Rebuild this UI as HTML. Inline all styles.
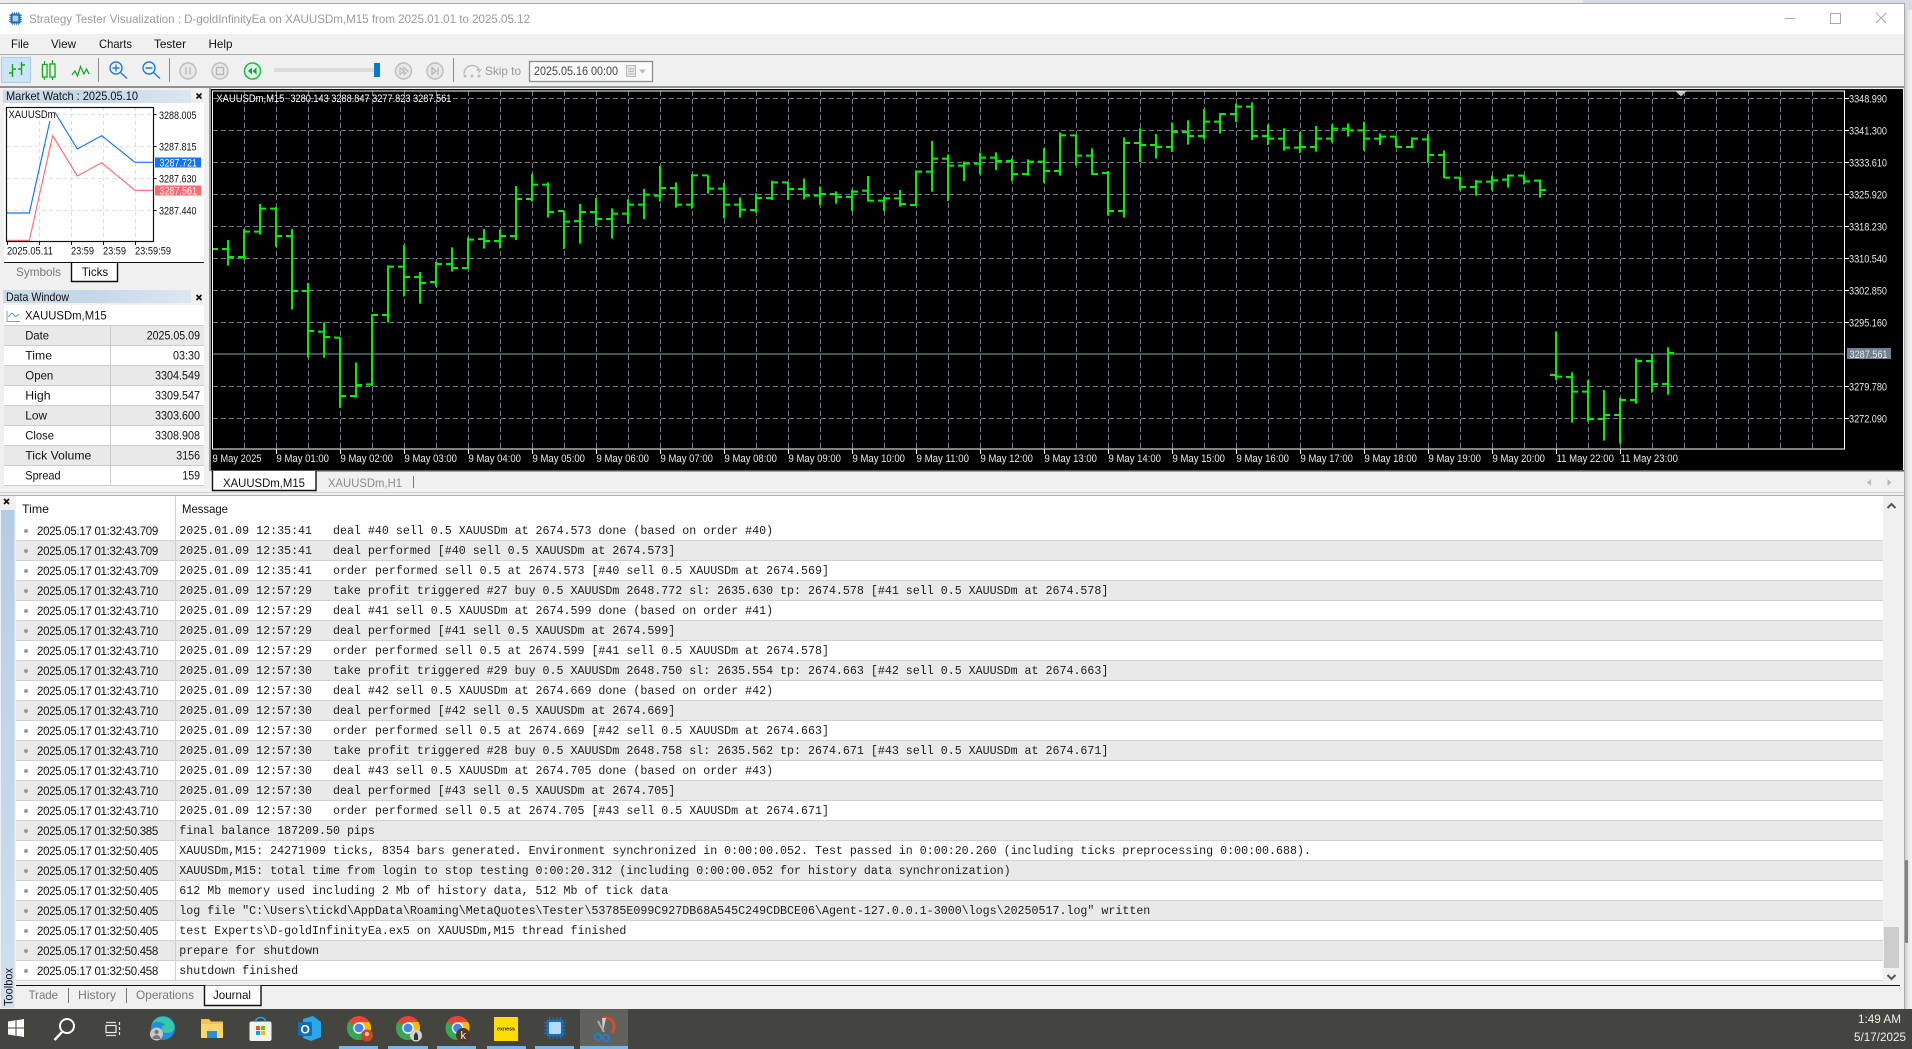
<!DOCTYPE html>
<html>
<head>
<meta charset="utf-8">
<title>Strategy Tester Visualization</title>
<style>
html,body{margin:0;padding:0;background:#f0f0f0}
#w{position:relative;width:1912px;height:1049px;overflow:hidden;background:#f0f0f0;filter:blur(.3px)}
svg#s{position:absolute;left:0;top:0}
svg text{font-family:"Liberation Sans",sans-serif;font-size:12px;fill:#111}
svg text.t{font-size:11px;fill:#e8e8e8}
#rows{position:absolute;left:16px;top:521px;width:1867px}
.r{height:19px;border-bottom:1px solid #d2d2d2;background:#fff;position:relative;line-height:19px;white-space:pre}
.r:nth-child(even){background:#e9e9e9}
.r i{position:absolute;left:8px;top:8px;width:4px;height:4px;border-radius:50%;background:#999}
.r b{position:absolute;left:21px;top:1px;font:11.5px/20px "Liberation Sans",sans-serif;letter-spacing:-.3px;color:#111}
.r u{position:absolute;left:163.3px;top:1px;text-decoration:none;font:11.65px/20px "Liberation Mono",monospace;color:#1c1c1c}
#cd{position:absolute;left:175px;top:496px;width:1px;height:485px;background:#d0d0d0}
</style>
</head>
<body>
<div id="w">
<svg id="s" width="1912" height="1049" viewBox="0 0 1912 1049" xmlns="http://www.w3.org/2000/svg">
<defs>
<linearGradient id="hd" x1="0" x2="1" y1="0" y2="0"><stop offset="0" stop-color="#cddcea"/><stop offset=".45" stop-color="#c4d7e8"/><stop offset="1" stop-color="#dce7f1"/></linearGradient>
<linearGradient id="tb" x1="0" x2="0" y1="0" y2="1"><stop offset="0" stop-color="#b4cde6"/><stop offset="1" stop-color="#d0e0ef"/></linearGradient>
<linearGradient id="rg" x1="0" x2="1" y1="0" y2="0"><stop offset="0" stop-color="#c8c8c8"/><stop offset=".5" stop-color="#e6e6e6"/><stop offset="1" stop-color="#f4f4f4"/></linearGradient>
<g id="chrome"><circle r="12" fill="#ea4335"/><path d="M0 0L-10.4 -6A12 12 0 0 0 6 10.4Z" fill="#34a853"/><path d="M0 0L6 10.4A12 12 0 0 0 10.4 -6L0 -6Z" fill="#fbbc05"/><circle r="5.8" fill="#fff"/><circle r="4.4" fill="#4285f4"/></g>
<g id="chip"><rect x="-7" y="-7" width="14" height="14" rx="1.5" fill="#1c6fb7"/><path d="M-4.5 -9V9M-1.5 -9V9M1.5 -9V9M4.5 -9V9M-9 -4.5H9M-9 -1.5H9M-9 1.5H9M-9 4.5H9" stroke="#1c6fb7" stroke-width="1"/></g>
</defs>

<!-- top strip / window frame -->
<rect x="0" y="0" width="1583" height="3" fill="#ececec"/>
<rect x="1583" y="0" width="329" height="10" fill="#d6dbe7"/>
<rect x="1904" y="10" width="8" height="1000" fill="url(#rg)"/>
<rect x="0" y="3" width="1904" height="1" fill="#aaaaaa"/>
<rect x="1904" y="3" width="1" height="1006" fill="#a8a8a8"/>
<rect x="1905" y="860" width="3" height="83" rx="1" fill="#808080"/>
<!-- title bar -->
<rect x="0" y="4" width="1904" height="30" fill="#fff"/>
<g transform="translate(15.5 18.5) scale(.72)"><use href="#chip"/><rect x="-4" y="-4" width="8" height="8" fill="#a9d3f5"/></g>
<text x="29" y="23" textLength="501" lengthAdjust="spacingAndGlyphs" style="fill:#9a9a9a">Strategy Tester Visualization : D-goldInfinityEa on XAUUSDm,M15 from 2025.01.01 to 2025.05.12</text>
<path d="M1785 18.5H1795" stroke="#aaa"/>
<rect x="1830.5" y="13.5" width="10" height="10" fill="none" stroke="#aaa"/>
<path d="M1876 13L1886 23M1886 13L1876 23" stroke="#aaa"/>
<!-- menu -->
<rect x="0" y="34" width="1904" height="20" fill="#f0f0f0"/>
<rect x="0" y="54" width="1904" height="1" fill="#aaaaaa"/>
<text x="11" y="48" textLength="18" lengthAdjust="spacingAndGlyphs">File</text>
<text x="51" y="48" textLength="25" lengthAdjust="spacingAndGlyphs">View</text>
<text x="99" y="48" textLength="33" lengthAdjust="spacingAndGlyphs">Charts</text>
<text x="154" y="48" textLength="32" lengthAdjust="spacingAndGlyphs">Tester</text>
<text x="208.5" y="48" textLength="24" lengthAdjust="spacingAndGlyphs">Help</text>
<!-- toolbar -->
<rect x="1.5" y="57.5" width="29" height="25" fill="#cce4f7" stroke="#a5cdee"/>
<path d="M12.5 64V77M9 73h3.5M12.5 69h3.5M21.5 62V75M18 69h3.5M21.5 65h3.5" stroke="#14a51c" stroke-width="1.4" fill="none"/>
<path d="M44.5 61V80M52.5 60V80" stroke="#14b01a" stroke-width="1.2"/>
<rect x="42.5" y="64.5" width="4.5" height="12.5" fill="#fff" stroke="#14b01a" stroke-width="1.4"/>
<rect x="50" y="64" width="5" height="13" fill="#fff" stroke="#14b01a" stroke-width="1.4"/>
<path d="M72 75L75 71L77.5 76L80.5 66.5L84 74L86.5 69L89 74" fill="none" stroke="#14a51c" stroke-width="1.2"/>
<path d="M98.5 58V82M169.5 58V82M453.5 58V82" stroke="#8a8a8a"/>
<g fill="none" stroke="#1f7fd2" stroke-width="1.4"><circle cx="116" cy="68" r="6"/><path d="M120.5 72.5L127 78.5M112.5 68h7M116 64.5v7"/><circle cx="149" cy="68" r="6"/><path d="M153.5 72.5L160 78.5M145.5 68h7"/></g>
<g fill="#e8e8e8" stroke="#bdbdbd" stroke-width="1.4"><circle cx="188" cy="71" r="8"/><circle cx="220" cy="71" r="8"/><circle cx="403.5" cy="71" r="8"/><circle cx="435" cy="71" r="8"/></g>
<path d="M186 67.5v7M190 67.5v7" stroke="#b5b5b5" stroke-width="1.3"/>
<rect x="216.5" y="67.5" width="7" height="7" fill="none" stroke="#b5b5b5" stroke-width="1.3"/>
<circle cx="252.5" cy="71" r="8" fill="#dff6e3" stroke="#1cc04a" stroke-width="1.6"/>
<path d="M252 67.5L248 71L252 74.5ZM256.5 67.5L252.5 71L256.5 74.5Z" fill="#1b9e3f"/>
<rect x="274" y="68" width="102" height="4" fill="#dcdcdc"/>
<rect x="374" y="63" width="6" height="14" fill="#0b78d4"/>
<path d="M400 67.5L404 71L400 74.5ZM404 67.5L408 71L404 74.5Z" fill="none" stroke="#b5b5b5"/>
<path d="M432 67.5L436 71L432 74.5ZM438 67.5v7" fill="none" stroke="#b5b5b5" stroke-width="1.2"/>
<path d="M464 74C464 64 477 63 479 70M476.5 70h4l-2 2.5" fill="none" stroke="#bbb" stroke-width="1.4"/>
<circle cx="465" cy="76" r="1.5" fill="#bbb"/><circle cx="472" cy="76" r="1.5" fill="#bbb"/><circle cx="479" cy="76" r="1.5" fill="#bbb"/>
<text x="485" y="75" textLength="36" lengthAdjust="spacingAndGlyphs" style="fill:#999">Skip to</text>
<rect x="529.5" y="61.5" width="123" height="20" fill="#fafafa" stroke="#8c8c8c" stroke-width="1.3"/>
<text x="534" y="75" textLength="84" lengthAdjust="spacingAndGlyphs" style="fill:#444">2025.05.16 00:00</text>
<rect x="626.5" y="65.5" width="9" height="11" fill="#e6e6e6" stroke="#bbb"/><path d="M628 69h6M628 71.5h6M628 74h6" stroke="#bbb"/>
<path d="M639 69.5h7l-3.5 4z" fill="#bbb"/>
<rect x="0" y="86" width="1904" height="2" fill="#8f8f8f"/>

<!-- Market Watch -->
<rect x="3" y="90" width="188" height="13" fill="url(#hd)"/>
<text x="6" y="100" textLength="132" lengthAdjust="spacingAndGlyphs">Market Watch : 2025.05.10</text>
<path d="M196.5 93.5l5 5m0-5l-5 5" stroke="#111" stroke-width="1.7"/>
<rect x="4" y="103" width="200" height="159" fill="#fff"/>
<path d="M39.5 107V241M71.5 107V241M103.5 107V241M135.5 107V241M7 114.5H153M7 146.5H153M7 178.5H153M7 210.5H153" stroke="#dedede" stroke-dasharray="4 3"/>
<g transform="scale(.33333) translate(0 255)" fill="none" stroke-width="3.4">
<path d="M20 384H88L158 71L232 192L305 152L405 232H461" stroke="#0f74fb"/>
<path d="M20 466H88L158 152L232 273L305 233L405 316H461" stroke="#ff6a6a"/>
</g>
<rect x="8" y="108" width="47" height="13" fill="#fff"/>
<text x="8.5" y="118" textLength="47" lengthAdjust="spacingAndGlyphs" style="font-size:11px">XAUUSDm</text>
<rect x="6.5" y="107.5" width="147" height="134" fill="none" stroke="#111" stroke-width="1.2"/>
<path d="M154 114.5h2.500M154 146.5h2.500M154 178.5h2.500M154 210.5h2.500M7.5 242v3M39.5 242v3M71.5 242v3M103.5 242v3M135.5 242v3" stroke="#111"/>
<rect x="155" y="157.5" width="46" height="10" fill="#0f74fb"/>
<rect x="155" y="185.5" width="46" height="10" fill="#ff6a6a"/>
<g style="font-size:11px">
<text x="159" y="119" textLength="37.5" lengthAdjust="spacingAndGlyphs" style="font-size:11px">3288.005</text>
<text x="159" y="150.7" textLength="37.5" lengthAdjust="spacingAndGlyphs" style="font-size:11px">3287.815</text>
<text x="159" y="182.3" textLength="37.5" lengthAdjust="spacingAndGlyphs" style="font-size:11px">3287.630</text>
<text x="159" y="214.7" textLength="37.5" lengthAdjust="spacingAndGlyphs" style="font-size:11px">3287.440</text>
<text x="159.5" y="166.4" textLength="37.5" lengthAdjust="spacingAndGlyphs" style="font-size:11px;fill:#fff">3287.721</text>
<text x="159.5" y="194.4" textLength="37.5" lengthAdjust="spacingAndGlyphs" style="font-size:11px;fill:#fff">3287.561</text>
<text x="7" y="254.7" textLength="46" lengthAdjust="spacingAndGlyphs" style="font-size:11px">2025.05.11</text>
<text x="71" y="254.7" textLength="23" lengthAdjust="spacingAndGlyphs" style="font-size:11px">23:59</text>
<text x="103" y="254.7" textLength="23" lengthAdjust="spacingAndGlyphs" style="font-size:11px">23:59</text>
<text x="135" y="254.7" textLength="36" lengthAdjust="spacingAndGlyphs" style="font-size:11px">23:59:59</text>
</g>
<rect x="4" y="262" width="200" height="23" fill="#f0f0f0"/>
<rect x="4" y="262" width="200" height="1" fill="#111"/>
<path d="M71.5 263V281.5H117.5V263" fill="#fff" stroke="#111" stroke-width="1.4"/>
<text x="16" y="276" textLength="45" lengthAdjust="spacingAndGlyphs" style="fill:#777">Symbols</text>
<text x="81.7" y="276" textLength="26.5" lengthAdjust="spacingAndGlyphs">Ticks</text>

<!-- Data Window -->
<rect x="3" y="290" width="188" height="13" fill="url(#hd)"/>
<text x="6" y="301" textLength="63" lengthAdjust="spacingAndGlyphs">Data Window</text>
<path d="M196.5 295l5 5m0-5l-5 5" stroke="#111" stroke-width="1.7"/>
<rect x="4" y="305" width="200" height="180" fill="#fff"/>
<rect x="4" y="326" width="200" height="20" fill="#e9e9e9"/>
<rect x="4" y="366" width="200" height="20" fill="#e9e9e9"/>
<rect x="4" y="406" width="200" height="20" fill="#e9e9e9"/>
<rect x="4" y="446" width="200" height="20" fill="#e9e9e9"/>
<path d="M4 325.5H204M4 345.5H204M4 365.5H204M4 385.5H204M4 405.5H204M4 425.5H204M4 445.5H204M4 465.5H204M4 485.5H204M110.5 326V485" stroke="#cdcdcd"/>
<path d="M7 311V321.5H20" fill="none" stroke="#9a9a9a"/>
<path d="M8.500 317C11 312 13 313 14 315.500C15 317 17 316.500 19 314" fill="none" stroke="#3f8fd8"/>
<text x="25" y="319.7" textLength="81.7" lengthAdjust="spacingAndGlyphs">XAUUSDm,M15</text>
<text x="25.300" y="339.700" textLength="23.700" lengthAdjust="spacingAndGlyphs">Date</text>
<text x="25.300" y="359.700" textLength="26.700" lengthAdjust="spacingAndGlyphs">Time</text>
<text x="25.300" y="379.700" textLength="28" lengthAdjust="spacingAndGlyphs">Open</text>
<text x="25.300" y="399.700" textLength="25.300" lengthAdjust="spacingAndGlyphs">High</text>
<text x="25.300" y="419.700" textLength="21.700" lengthAdjust="spacingAndGlyphs">Low</text>
<text x="25.300" y="439.700" textLength="28.700" lengthAdjust="spacingAndGlyphs">Close</text>
<text x="25.300" y="459.700" textLength="66" lengthAdjust="spacingAndGlyphs">Tick Volume</text>
<text x="25.300" y="479.700" textLength="35.300" lengthAdjust="spacingAndGlyphs">Spread</text>
<text x="146.700" y="339.700" textLength="53.300" lengthAdjust="spacingAndGlyphs">2025.05.09</text>
<text x="173" y="359.700" textLength="27" lengthAdjust="spacingAndGlyphs">03:30</text>
<text x="155" y="379.700" textLength="45" lengthAdjust="spacingAndGlyphs">3304.549</text>
<text x="155" y="399.700" textLength="45" lengthAdjust="spacingAndGlyphs">3309.547</text>
<text x="155" y="419.700" textLength="45" lengthAdjust="spacingAndGlyphs">3303.600</text>
<text x="155" y="439.700" textLength="45" lengthAdjust="spacingAndGlyphs">3308.908</text>
<text x="176.300" y="459.700" textLength="23.700" lengthAdjust="spacingAndGlyphs">3156</text>
<text x="182.300" y="479.700" textLength="17.700" lengthAdjust="spacingAndGlyphs">159</text>

<!-- Chart -->
<rect x="209" y="88" width="2" height="383" fill="#9a9a9a"/>
<rect x="211" y="89" width="1692" height="381" fill="#000"/>
<rect x="211" y="470" width="1693" height="1.500" fill="#555"/>
<path d="M244.5 91V449m32-358V449m32-358V449m32-358V449m32-358V449m32-358V449m32-358V449m32-358V449m32-358V449m32-358V449m32-358V449m32-358V449m32-358V449m32-358V449m32-358V449m32-358V449m32-358V449m32-358V449m32-358V449m32-358V449m32-358V449m32-358V449m32-358V449m32-358V449m32-358V449m32-358V449m32-358V449m32-358V449m32-358V449m32-358V449m32-358V449m32-358V449m32-358V449m32-358V449m32-358V449m32-358V449m32-358V449m32-358V449m32-358V449m32-358V449m32-358V449m32-358V449m32-358V449m32-358V449m32-358V449m32-358V449m32-358V449m32-358V449m32-358V449m32-358V449" stroke="#708090" stroke-dasharray="5 3" fill="none"/>
<path d="M213 98.5H1844M213 130.5H1844M213 162.5H1844M213 194.5H1844M213 226.5H1844M213 258.5H1844M213 290.5H1844M213 322.5H1844M213 386.5H1844M213 418.5H1844" stroke="#708090" stroke-dasharray="5 3" fill="none"/>
<path d="M213 354H1845" stroke="#708090" stroke-width="1.2"/>
<g transform="translate(0 85) scale(1 .33333)"><path vector-effect="non-scaling-stroke" stroke="#00f000" stroke-width="2" fill="none" d="M213 492h5
M228 465V542M222 492h6M228 516h6
M244 432V524M238 516h6M244 440h6
M260 357V449M254 440h6M260 371h6
M276 366V486M270 371h6M276 453h6
M292 432V674M286 453h6M292 618h6
M308 594V818M302 618h6M308 738h6
M324 712V818M318 740h6M324 756h6
M340 757V968M334 758h6M340 933h6
M356 832V938M350 933h6M356 900h6
M372 687V903M366 898h6M372 690h6
M388 541V712M382 690h6M388 545h6
M404 480V634M398 545h6M404 576h6
M420 561V656M414 576h6M420 594h6
M436 530V605M430 591h6M436 537h6
M452 487V560M446 537h6M452 549h6
M468 457V550M462 549h6M468 464h6
M484 432V491M478 462h6M484 468h6
M500 434V490M494 468h6M500 453h6
M516 303V465M510 453h6M516 342h6
M532 267V350M526 342h6M532 299h6
M548 292V398M542 299h6M548 381h6
M564 378V492M558 378h6M564 410h6
M580 357V476M574 408h6M580 381h6
M596 340V423M590 381h6M596 402h6
M612 370V461M606 402h6M612 386h6
M628 343V417M622 386h6M628 359h6
M644 312V402M638 359h6M644 329h6
M660 243V350M654 332h6M660 309h6
M676 292V368M670 309h6M676 359h6
M692 267V371M686 359h6M692 271h6
M708 271V326M702 271h6M708 311h6
M724 293V400M718 311h6M724 359h6
M740 337V398M734 359h6M740 374h6
M756 325V383M750 375h6M756 339h6
M772 287V345M766 339h6M772 292h6
M788 292V345M782 292h6M788 312h6
M804 280V343M798 312h6M804 332h6
M820 304V360M814 332h6M820 327h6
M836 319V356M830 327h6M836 336h6
M852 314V378M846 336h6M852 320h6
M868 273V350M862 317h6M868 347h6
M884 335V378M878 347h6M884 340h6
M900 315V365M894 340h6M900 357h6
M916 256V362M910 360h6M916 260h6
M932 168V320M926 260h6M932 221h6
M948 208V348M942 221h6M948 242h6
M964 229V288M958 242h6M964 236h6
M980 203V268M974 236h6M980 218h6
M996 202V255M990 218h6M996 228h6
M1012 220V288M1006 228h6M1012 267h6
M1028 223V272M1022 267h6M1028 230h6
M1044 189V294M1038 230h6M1044 258h6
M1060 142V272M1054 258h6M1060 151h6
M1076 148V242M1070 151h6M1076 212h6
M1092 190V270M1086 212h6M1092 267h6
M1108 258V392M1102 264h6M1108 378h6
M1124 157V398M1118 378h6M1124 174h6
M1140 130V231M1134 174h6M1140 180h6
M1156 147V221M1150 180h6M1156 186h6
M1172 112V201M1166 186h6M1172 141h6
M1188 106V179M1182 141h6M1188 153h6
M1204 72V162M1198 153h6M1204 110h6
M1220 84V146M1214 110h6M1220 87h6
M1236 56V111M1230 87h6M1236 65h6
M1252 52V165M1246 65h6M1252 153h6
M1268 118V180M1262 153h6M1268 161h6
M1284 130V197M1278 161h6M1284 188h6
M1300 141V204M1294 188h6M1300 186h6
M1316 123V200M1310 186h6M1316 161h6
M1332 118V172M1326 161h6M1332 131h6
M1348 115V155M1342 131h6M1348 136h6
M1364 110V197M1358 136h6M1364 161h6
M1380 145V180M1374 161h6M1380 155h6
M1396 155V187M1390 155h6M1396 186h6
M1412 157V190M1406 186h6M1412 161h6
M1428 148V233M1422 163h6M1428 210h6
M1444 196V279M1438 210h6M1444 278h6
M1460 275V316M1454 278h6M1460 306h6
M1476 285V332M1470 306h6M1476 290h6
M1492 272V317M1486 290h6M1492 286h6
M1508 268V308M1502 284h6M1508 272h6
M1524 272V298M1518 272h6M1524 289h6
M1540 283V338M1534 287h6M1540 315h6
M1556 740V885M1550 870h6M1556 875h6
M1572 862V1013M1566 876h6M1572 920h6
M1588 885V1010M1582 920h6M1588 1002h6
M1604 915V1067M1598 1002h6M1604 990h6
M1620 938V1076M1614 990h6M1620 945h6
M1636 820V956M1630 945h6M1636 828h6
M1652 806V923M1646 828h6M1652 897h6
M1668 787V929M1662 897h6M1668 804h6"/></g>
<rect x="212.5" y="91" width="1632" height="358" fill="none" stroke="#fff"/>
<path d="M1676 91.500h10l-5 5z" fill="#b8c4d2"/>
<path d="M1845 98.500h4M1845 130.500h4M1845 162.500h4M1845 194.500h4M1845 226.500h4M1845 258.500h4M1845 290.500h4M1845 322.500h4M1845 386.500h4M1845 418.500h4" stroke="#fff"/>
<path d="M276.500 449v5M340.500 449v5M404.500 449v5M468.500 449v5M532.500 449v5M596.500 449v5M660.500 449v5M724.500 449v5M788.500 449v5M852.500 449v5M916.500 449v5M980.500 449v5M1044.500 449v5M1108.500 449v5M1172.500 449v5M1236.500 449v5M1300.500 449v5M1364.500 449v5M1428.500 449v5M1492.500 449v5M1556.500 449v5M1620.500 449v5" stroke="#fff"/>
<text class="t" x="216.400" y="102" textLength="68" lengthAdjust="spacingAndGlyphs" style="fill:#fff">XAUUSDm,M15</text>
<text class="t" x="290.400" y="102" textLength="161" lengthAdjust="spacingAndGlyphs" style="fill:#fff">3280.143 3288.847 3277.823 3287.561</text>
<text class="t" x="1849" y="102.500" textLength="38" lengthAdjust="spacingAndGlyphs">3348.990</text>
<text class="t" x="1849" y="134.500" textLength="38" lengthAdjust="spacingAndGlyphs">3341.300</text>
<text class="t" x="1849" y="166.500" textLength="38" lengthAdjust="spacingAndGlyphs">3333.610</text>
<text class="t" x="1849" y="198.500" textLength="38" lengthAdjust="spacingAndGlyphs">3325.920</text>
<text class="t" x="1849" y="230.500" textLength="38" lengthAdjust="spacingAndGlyphs">3318.230</text>
<text class="t" x="1849" y="262.500" textLength="38" lengthAdjust="spacingAndGlyphs">3310.540</text>
<text class="t" x="1849" y="294.500" textLength="38" lengthAdjust="spacingAndGlyphs">3302.850</text>
<text class="t" x="1849" y="326.500" textLength="38" lengthAdjust="spacingAndGlyphs">3295.160</text>
<text class="t" x="1849" y="390.500" textLength="38" lengthAdjust="spacingAndGlyphs">3279.780</text>
<text class="t" x="1849" y="422.500" textLength="38" lengthAdjust="spacingAndGlyphs">3272.090</text>
<rect x="1847" y="348" width="44" height="11" fill="#708090"/>
<text class="t" x="1849.500" y="358" textLength="38" lengthAdjust="spacingAndGlyphs">3287.561</text>
<g>
<text class="t" x="212.500" y="462" textLength="49" lengthAdjust="spacingAndGlyphs">9 May 2025</text>
<text class="t" x="276.500" y="462" textLength="52.500" lengthAdjust="spacingAndGlyphs">9 May 01:00</text>
<text class="t" x="340.500" y="462" textLength="52.500" lengthAdjust="spacingAndGlyphs">9 May 02:00</text>
<text class="t" x="404.500" y="462" textLength="52.500" lengthAdjust="spacingAndGlyphs">9 May 03:00</text>
<text class="t" x="468.500" y="462" textLength="52.500" lengthAdjust="spacingAndGlyphs">9 May 04:00</text>
<text class="t" x="532.500" y="462" textLength="52.500" lengthAdjust="spacingAndGlyphs">9 May 05:00</text>
<text class="t" x="596.500" y="462" textLength="52.500" lengthAdjust="spacingAndGlyphs">9 May 06:00</text>
<text class="t" x="660.500" y="462" textLength="52.500" lengthAdjust="spacingAndGlyphs">9 May 07:00</text>
<text class="t" x="724.500" y="462" textLength="52.500" lengthAdjust="spacingAndGlyphs">9 May 08:00</text>
<text class="t" x="788.500" y="462" textLength="52.500" lengthAdjust="spacingAndGlyphs">9 May 09:00</text>
<text class="t" x="852.500" y="462" textLength="52.500" lengthAdjust="spacingAndGlyphs">9 May 10:00</text>
<text class="t" x="916.500" y="462" textLength="52.500" lengthAdjust="spacingAndGlyphs">9 May 11:00</text>
<text class="t" x="980.500" y="462" textLength="52.500" lengthAdjust="spacingAndGlyphs">9 May 12:00</text>
<text class="t" x="1044.500" y="462" textLength="52.500" lengthAdjust="spacingAndGlyphs">9 May 13:00</text>
<text class="t" x="1108.500" y="462" textLength="52.500" lengthAdjust="spacingAndGlyphs">9 May 14:00</text>
<text class="t" x="1172.500" y="462" textLength="52.500" lengthAdjust="spacingAndGlyphs">9 May 15:00</text>
<text class="t" x="1236.500" y="462" textLength="52.500" lengthAdjust="spacingAndGlyphs">9 May 16:00</text>
<text class="t" x="1300.500" y="462" textLength="52.500" lengthAdjust="spacingAndGlyphs">9 May 17:00</text>
<text class="t" x="1364.500" y="462" textLength="52.500" lengthAdjust="spacingAndGlyphs">9 May 18:00</text>
<text class="t" x="1428.500" y="462" textLength="52.500" lengthAdjust="spacingAndGlyphs">9 May 19:00</text>
<text class="t" x="1492.500" y="462" textLength="52.500" lengthAdjust="spacingAndGlyphs">9 May 20:00</text>
<text class="t" x="1556.500" y="462" textLength="57.400" lengthAdjust="spacingAndGlyphs">11 May 22:00</text>
<text class="t" x="1620.500" y="462" textLength="57.400" lengthAdjust="spacingAndGlyphs">11 May 23:00</text>
</g>
<!-- chart tabs -->
<path d="M212.500 471V490.500H316V471" fill="#fff" stroke="#111" stroke-width="1.400"/>
<text x="223" y="487" textLength="82" lengthAdjust="spacingAndGlyphs">XAUUSDm,M15</text>
<text x="328" y="487" textLength="74" lengthAdjust="spacingAndGlyphs" style="fill:#8a8a8a">XAUUSDm,H1</text>
<path d="M413.500 476V488" stroke="#777"/>
<path d="M1871 479l-4 3.500l4 3.500zM1887.500 479l4 3.500l-4 3.500z" fill="#b8b8b8"/>
<rect x="0" y="492" width="1904" height="1" fill="#d0d0d0"/>
<rect x="0" y="495" width="1904" height="1" fill="#b0b0b0"/>

<!-- Toolbox -->
<path d="M4 499l5 5m0-5l-5 5" stroke="#111" stroke-width="1.700"/>
<rect x="1" y="510" width="13.500" height="498" fill="url(#tb)"/>
<text transform="translate(12.500 1006) rotate(-90)" textLength="38" lengthAdjust="spacingAndGlyphs">Toolbox</text>
<rect x="16" y="496" width="1867" height="25" fill="#fff"/>
<text x="22" y="513" textLength="27" lengthAdjust="spacingAndGlyphs">Time</text>
<text x="182" y="513" textLength="46" lengthAdjust="spacingAndGlyphs">Message</text>
<rect x="1884" y="496" width="17" height="489" fill="#f0f0f0"/>
<path d="M1887.500 508l4-4l4 4" fill="none" stroke="#555" stroke-width="2"/>
<path d="M1887.500 975l4 4l4-4" fill="none" stroke="#555" stroke-width="2"/>
<rect x="1884" y="927" width="15" height="41" fill="#cdcdcd"/>
<rect x="16" y="985" width="1884" height="1" fill="#111"/>
<path d="M204.500 985.500V1005.500H261V985.500" fill="#fff" stroke="#111" stroke-width="1.400"/>
<text x="28.600" y="999" textLength="29.400" lengthAdjust="spacingAndGlyphs" style="fill:#777">Trade</text>
<text x="78" y="999" textLength="38" lengthAdjust="spacingAndGlyphs" style="fill:#777">History</text>
<text x="136" y="999" textLength="58" lengthAdjust="spacingAndGlyphs" style="fill:#777">Operations</text>
<text x="213" y="999" textLength="38" lengthAdjust="spacingAndGlyphs">Journal</text>
<path d="M68.500 988V1003M126.500 988V1003" stroke="#777"/>

<!-- Taskbar -->
<rect x="0" y="1009" width="1912" height="40" fill="#45453f"/>
<rect x="580" y="1009" width="48" height="40" fill="#62625d"/>
<path d="M339 1047.500H378M388 1047.500H428M437 1047.500H476M487 1047.500H526M535 1047.500H574M580 1047.500H628" stroke="#76b9ed" stroke-width="3"/>
<path d="M8 1021.500L15.500 1020.300V1027.500H8ZM16.500 1020.200L24 1019V1027.500H16.500ZM8 1028.500H15.500V1035.700L8 1034.500ZM16.500 1028.500H24V1037L16.500 1035.800Z" fill="#fff"/>
<circle cx="67" cy="1026" r="7" fill="none" stroke="#fff" stroke-width="2"/>
<path d="M62 1032L54.500 1040" stroke="#fff" stroke-width="2.400"/>
<path d="M106 1022.500H116M106 1035.500H116" stroke="#ddd" stroke-width="1.200"/>
<rect x="106" y="1025.500" width="10" height="7" fill="none" stroke="#eee" stroke-width="1.200"/>
<path d="M119.500 1022V1037" stroke="#eee" stroke-width="1.200" stroke-dasharray="3 2"/>
<!-- edge -->
<circle cx="163" cy="1028" r="12" fill="#1f8fd8"/>
<path d="M152 1024C155 1015 170 1014 174 1024C176 1030 172 1033 167 1033C160 1033 160 1026 165 1025C162 1021 155 1021 152 1024Z" fill="#36c6a8"/>
<circle cx="156.500" cy="1034" r="6.500" fill="#c9c9c9"/><circle cx="156.500" cy="1032" r="2.200" fill="#777"/><path d="M152.500 1039a4 4 0 0 1 8 0z" fill="#777"/>
<!-- explorer -->
<path d="M201 1019h8l2 2.500h12V1038h-22z" fill="#f7c34a"/>
<rect x="201" y="1024" width="22" height="14" fill="#fbd66b"/>
<rect x="207" y="1031" width="10" height="7" fill="#2f8fd0"/>
<!-- store -->
<rect x="249.500" y="1021.500" width="22" height="19.500" rx="2" fill="#f2f2f2"/>
<path d="M255.500 1022c0-6 10-6 10 0" fill="none" stroke="#1da3e0" stroke-width="1.600"/>
<rect x="256" y="1026" width="4" height="4" fill="#f25022"/><rect x="261" y="1026" width="4" height="4" fill="#7fba00"/><rect x="256" y="1031" width="4" height="4" fill="#00a4ef"/><rect x="261" y="1031" width="4" height="4" fill="#ffb900"/>
<!-- outlook -->
<path d="M303 1019L313 1016L321 1022V1037L311 1041L303 1038Z" fill="#28a8ea"/>
<rect x="298" y="1022" width="14" height="14" rx="1.500" fill="#0f6cbd"/>
<text x="300.500" y="1033.500" style="font-size:12px;font-weight:bold;fill:#fff">O</text>
<!-- chrome -->
<use href="#chrome" x="359" y="1028"/>
<circle cx="367" cy="1035.500" r="6" fill="#c9472a"/><circle cx="367" cy="1034" r="2.200" fill="#f2c79b"/>
<use href="#chrome" x="408" y="1028"/>
<circle cx="416" cy="1035.500" r="6" fill="#cfcfcf"/><path d="M414 1040v-5l2-3l2 3v5z" fill="#333"/>
<use href="#chrome" x="457.600" y="1028"/>
<circle cx="463" cy="1035" r="7" fill="#55392d"/>
<text x="460.500" y="1039" style="font-size:11px;fill:#eee">k</text>
<!-- exness -->
<rect x="494" y="1017" width="24" height="24" fill="#ffdd00"/>
<text x="497" y="1030.500" textLength="18" lengthAdjust="spacingAndGlyphs" style="font-size:5px;font-weight:bold;fill:#222">exness</text>
<!-- chip -->
<g transform="translate(555 1028) scale(1.200)"><use href="#chip"/><rect x="-5" y="-5" width="10" height="10" rx="1" fill="#b4dcfa"/></g>
<!-- snip -->
<path d="M603 1018C612 1016 617 1024 612 1033" fill="none" stroke="#d8482a" stroke-width="3"/>
<path d="M602 1018L603 1032L606 1018Z" fill="#cfcfcf"/>
<path d="M598 1021L604 1032" stroke="#aaa" stroke-width="2"/>
<circle cx="598" cy="1037" r="3.200" fill="none" stroke="#1f7fd2" stroke-width="2"/>
<circle cx="606" cy="1038" r="3.200" fill="none" stroke="#1f7fd2" stroke-width="2"/>
<text x="1858" y="1023" textLength="43" lengthAdjust="spacingAndGlyphs" style="fill:#f0f0ea">1:49 AM</text>
<text x="1854" y="1041" textLength="52" lengthAdjust="spacingAndGlyphs" style="fill:#f0f0ea">5/17/2025</text>
</svg>

<div id="rows">
<div class="r"><i></i><b>2025.05.17 01:32:43.709</b><u>2025.01.09 12:35:41   deal #40 sell 0.5 XAUUSDm at 2674.573 done (based on order #40)</u></div>
<div class="r"><i></i><b>2025.05.17 01:32:43.709</b><u>2025.01.09 12:35:41   deal performed [#40 sell 0.5 XAUUSDm at 2674.573]</u></div>
<div class="r"><i></i><b>2025.05.17 01:32:43.709</b><u>2025.01.09 12:35:41   order performed sell 0.5 at 2674.573 [#40 sell 0.5 XAUUSDm at 2674.569]</u></div>
<div class="r"><i></i><b>2025.05.17 01:32:43.710</b><u>2025.01.09 12:57:29   take profit triggered #27 buy 0.5 XAUUSDm 2648.772 sl: 2635.630 tp: 2674.578 [#41 sell 0.5 XAUUSDm at 2674.578]</u></div>
<div class="r"><i></i><b>2025.05.17 01:32:43.710</b><u>2025.01.09 12:57:29   deal #41 sell 0.5 XAUUSDm at 2674.599 done (based on order #41)</u></div>
<div class="r"><i></i><b>2025.05.17 01:32:43.710</b><u>2025.01.09 12:57:29   deal performed [#41 sell 0.5 XAUUSDm at 2674.599]</u></div>
<div class="r"><i></i><b>2025.05.17 01:32:43.710</b><u>2025.01.09 12:57:29   order performed sell 0.5 at 2674.599 [#41 sell 0.5 XAUUSDm at 2674.578]</u></div>
<div class="r"><i></i><b>2025.05.17 01:32:43.710</b><u>2025.01.09 12:57:30   take profit triggered #29 buy 0.5 XAUUSDm 2648.750 sl: 2635.554 tp: 2674.663 [#42 sell 0.5 XAUUSDm at 2674.663]</u></div>
<div class="r"><i></i><b>2025.05.17 01:32:43.710</b><u>2025.01.09 12:57:30   deal #42 sell 0.5 XAUUSDm at 2674.669 done (based on order #42)</u></div>
<div class="r"><i></i><b>2025.05.17 01:32:43.710</b><u>2025.01.09 12:57:30   deal performed [#42 sell 0.5 XAUUSDm at 2674.669]</u></div>
<div class="r"><i></i><b>2025.05.17 01:32:43.710</b><u>2025.01.09 12:57:30   order performed sell 0.5 at 2674.669 [#42 sell 0.5 XAUUSDm at 2674.663]</u></div>
<div class="r"><i></i><b>2025.05.17 01:32:43.710</b><u>2025.01.09 12:57:30   take profit triggered #28 buy 0.5 XAUUSDm 2648.758 sl: 2635.562 tp: 2674.671 [#43 sell 0.5 XAUUSDm at 2674.671]</u></div>
<div class="r"><i></i><b>2025.05.17 01:32:43.710</b><u>2025.01.09 12:57:30   deal #43 sell 0.5 XAUUSDm at 2674.705 done (based on order #43)</u></div>
<div class="r"><i></i><b>2025.05.17 01:32:43.710</b><u>2025.01.09 12:57:30   deal performed [#43 sell 0.5 XAUUSDm at 2674.705]</u></div>
<div class="r"><i></i><b>2025.05.17 01:32:43.710</b><u>2025.01.09 12:57:30   order performed sell 0.5 at 2674.705 [#43 sell 0.5 XAUUSDm at 2674.671]</u></div>
<div class="r"><i></i><b>2025.05.17 01:32:50.385</b><u>final balance 187209.50 pips</u></div>
<div class="r"><i></i><b>2025.05.17 01:32:50.405</b><u>XAUUSDm,M15: 24271909 ticks, 8354 bars generated. Environment synchronized in 0:00:00.052. Test passed in 0:00:20.260 (including ticks preprocessing 0:00:00.688).</u></div>
<div class="r"><i></i><b>2025.05.17 01:32:50.405</b><u>XAUUSDm,M15: total time from login to stop testing 0:00:20.312 (including 0:00:00.052 for history data synchronization)</u></div>
<div class="r"><i></i><b>2025.05.17 01:32:50.405</b><u>612 Mb memory used including 2 Mb of history data, 512 Mb of tick data</u></div>
<div class="r"><i></i><b>2025.05.17 01:32:50.405</b><u>log file "C:\Users\tickd\AppData\Roaming\MetaQuotes\Tester\53785E099C927DB68A545C249CDBCE06\Agent-127.0.0.1-3000\logs\20250517.log" written</u></div>
<div class="r"><i></i><b>2025.05.17 01:32:50.405</b><u>test Experts\D-goldInfinityEa.ex5 on XAUUSDm,M15 thread finished</u></div>
<div class="r"><i></i><b>2025.05.17 01:32:50.458</b><u>prepare for shutdown</u></div>
<div class="r"><i></i><b>2025.05.17 01:32:50.458</b><u>shutdown finished</u></div>
</div>
<div id="cd"></div>
</div>
</body>
</html>
